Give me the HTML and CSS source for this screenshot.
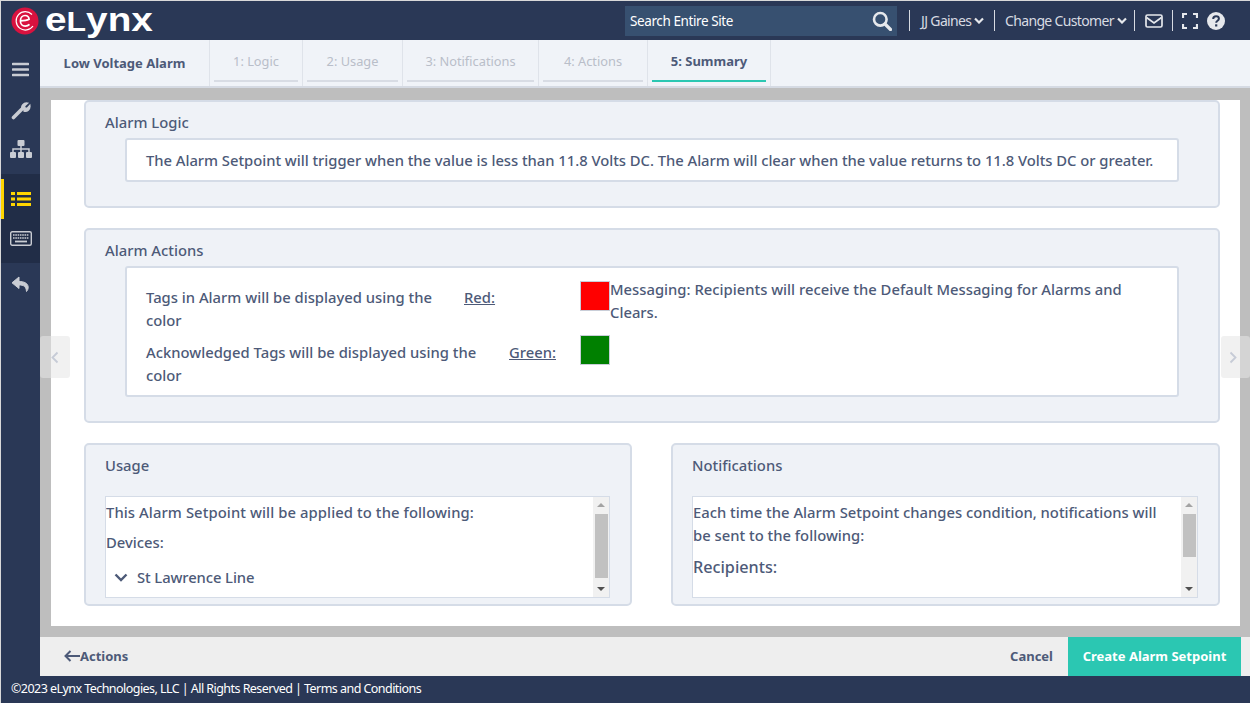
FILE: index.html
```html
<!DOCTYPE html>
<html lang="en">
<head>
<meta charset="utf-8">
<title>Low Voltage Alarm</title>
<link rel="stylesheet" href="styles.css">
</head>
<body>
<div class="app">
  <header class="topbar">
    <div class="brand">
      <svg class="logo-mark" width="28" height="28" viewBox="0 0 28 28"><circle cx="14" cy="14" r="13.500" fill="#d9123f"/><path d="M21 7.500A9.200 9.200 0 1 0 22 19" fill="none" stroke="#fff" stroke-width="1.200"/><path d="M9.500 13.800c3.500 0 7-.6 8.600-1.500-.2-2.200-1.800-3.800-4-3.800-2.800 0-4.700 2.400-4.700 5.400s2 5.200 4.800 5.200c1.800 0 3.200-.6 4.300-1.700" fill="none" stroke="#fff" stroke-width="1.700"/></svg>
      <span class="wordmark">e<span class="wordmark-l">L</span>ynx</span>
    </div>
    <div class="search"><span>Search Entire Site</span>
      <svg width="20" height="20" viewBox="0 0 20 20"><circle cx="8.300" cy="8.300" r="6.300" fill="none" stroke="#e6e8ec" stroke-width="2.600"/><path d="M13 13l5.500 5.500" stroke="#e6e8ec" stroke-width="3.200" stroke-linecap="round"/></svg>
    </div>
    <div class="topitem sep user">JJ Gaines <svg class="chev" width="10" height="7" viewBox="0 0 10 7"><path d="M1 1.500l4 4 4-4" fill="none" stroke="#e6e8ec" stroke-width="2.200"/></svg></div>
    <div class="topitem sep customer">Change Customer <svg class="chev" width="10" height="7" viewBox="0 0 10 7"><path d="M1 1.500l4 4 4-4" fill="none" stroke="#e6e8ec" stroke-width="2.200"/></svg></div>
    <div class="topicon sep mail"><svg width="18" height="14" viewBox="0 0 18 14"><rect x="1" y="1" width="16" height="12" rx="1.500" fill="none" stroke="#e6e8ec" stroke-width="1.700"/><path d="M1.500 3.500L9 9l7.500-5.500" fill="none" stroke="#e6e8ec" stroke-width="1.700"/></svg></div>
    <div class="topicon sep last">
      <svg width="16" height="16" viewBox="0 0 16 16"><path d="M1 5V1h4M11 1h4v4M15 11v4h-4M5 15H1v-4" fill="none" stroke="#e6e8ec" stroke-width="2.200"/></svg>
      <svg width="18" height="18" viewBox="0 0 18 18"><circle cx="9" cy="9" r="9" fill="#e6e8ec"/><path d="M6.200 7c0-1.700 1.300-2.700 2.900-2.700s2.800 1 2.800 2.400c0 2.100-2.700 2-2.700 4" fill="none" stroke="#2a3856" stroke-width="2"/><rect x="8.100" y="12.300" width="2.200" height="2.200" fill="#2a3856"/></svg>
    </div>
  </header>
  <div class="middle">
    <nav class="sidebar">
      <div class="navitem first"><svg width="17" height="15" viewBox="0 0 17 15"><path d="M1 2h15M1 7.500h15M1 13h15" stroke="#c9ccd3" stroke-width="2.600" stroke-linecap="round"/></svg></div>
      <div class="navitem tool"><svg width="20" height="20" viewBox="0 0 20 20"><path d="M11 9c-1-3 1.500-6.500 5.500-5.800L13.500 6l.5 2 2 .5 2.800-3c.6 4-2.800 6.500-5.800 5.500" fill="#c9ccd3" stroke="#c9ccd3" stroke-width="1.500" stroke-linecap="round"/><path d="M2.500 17.500l8-8" stroke="#c9ccd3" stroke-width="3.600" stroke-linecap="round"/></svg></div>
      <div class="navitem tree-nav"><svg width="24" height="20" viewBox="0 0 24 20"><g fill="#c9ccd3"><rect x="8.500" y="1" width="7" height="6" rx="1"/><rect x="1" y="13" width="6" height="6" rx="1"/><rect x="9" y="13" width="6" height="6" rx="1"/><rect x="17" y="13" width="6" height="6" rx="1"/></g><path d="M12 7v6M4 13v-3h16v3" fill="none" stroke="#c9ccd3" stroke-width="1.500"/></svg></div>
      <div class="navgroup">
        <div class="navitem active"><svg width="20" height="16" viewBox="0 0 20 16"><g fill="#ffd500"><rect x="0" y="1" width="4" height="3"/><rect x="0" y="6.500" width="4" height="3"/><rect x="0" y="12" width="4" height="3"/><rect x="6" y="1" width="14" height="3"/><rect x="6" y="6.500" width="14" height="3"/><rect x="6" y="12" width="14" height="3"/></g></svg></div>
        <div class="navitem keys"><svg width="22" height="15" viewBox="0 0 22 15"><rect x=".7" y=".7" width="20.600" height="13.600" rx="1.500" fill="none" stroke="#c9ccd3" stroke-width="1.400"/><path d="M3 4h16M3 7h16" stroke="#c9ccd3" stroke-width="1.600" stroke-dasharray="1.600 .7"/><path d="M5 10.500h12" stroke="#c9ccd3" stroke-width="1.800"/></svg></div>
      </div>
      <div class="navitem reply"><svg width="20" height="17" viewBox="0 0 20 17"><path d="M8 1L1 6.800l7 5.700V9c4.500 0 7 1 7.500 6.500 3-3 3-10-7.500-10z" fill="#c9ccd3" stroke="#c9ccd3" stroke-width="1" stroke-linejoin="round"/></svg></div>
    </nav>
    <div class="main">
      <div class="tabs">
        <div class="tab title"><span>Low Voltage Alarm</span></div>
        <div class="tab w1"><span>1: Logic</span></div>
        <div class="tab w2"><span>2: Usage</span></div>
        <div class="tab w3"><span>3: Notifications</span></div>
        <div class="tab w4"><span>4: Actions</span></div>
        <div class="tab w5 current"><span>5: Summary</span></div>
      </div>
      <div class="stage">
        <div class="sheet">
          <section class="card logic">
            <h2>Alarm Logic</h2>
            <div class="box sentence">The Alarm Setpoint will trigger when the value is less than 11.8 Volts DC. The Alarm will clear when the value returns to 11.8 Volts DC or greater.</div>
          </section>
          <section class="card actions">
            <h2>Alarm Actions</h2>
            <div class="box actions-box">
              <div class="colors">
                <div class="color-row">
                  <span class="color-label">Tags in Alarm will be displayed using the color</span>
                  <span class="color-name red">Red:</span>
                  <span class="swatch swatch-red"></span>
                </div>
                <div class="color-row">
                  <span class="color-label">Acknowledged Tags will be displayed using the color</span>
                  <span class="color-name green">Green:</span>
                  <span class="swatch swatch-green"></span>
                </div>
              </div>
              <div class="messaging">Messaging: Recipients will receive the Default Messaging for Alarms and Clears.</div>
            </div>
          </section>
          <div class="pair">
            <section class="card half">
              <h2>Usage</h2>
              <div class="scrollbox">
                <div class="scrolltext">
                  <p class="applied">This Alarm Setpoint will be applied to the following:</p>
                  <p class="devices">Devices:</p>
                  <p class="tree"><svg width="14" height="9" viewBox="0 0 14 9"><path d="M1.500 1.500L7 7l5.500-5.500" fill="none" stroke="#4d5a78" stroke-width="2.400"/></svg>St Lawrence Line</p>
                </div>
                <div class="scrollbar"><i class="up"></i><b class="thumb thumb-a"></b><i class="down"></i></div>
              </div>
            </section>
            <section class="card half">
              <h2>Notifications</h2>
              <div class="scrollbox">
                <div class="scrolltext">
                  <p class="wrap">Each time the Alarm Setpoint changes condition, notifications will be sent to the following:</p>
                  <p class="recipients">Recipients:</p>
                </div>
                <div class="scrollbar"><i class="up"></i><b class="thumb thumb-b"></b><i class="down"></i></div>
              </div>
            </section>
          </div>
        </div>
        <div class="pager left"><svg width="8" height="13" viewBox="0 0 8 13"><path d="M6.500 1.500l-5 5 5 5" fill="none" stroke="#c6cbd6" stroke-width="1.800"/></svg></div>
        <div class="pager right"><svg width="8" height="13" viewBox="0 0 8 13"><path d="M1.500 1.500l5 5-5 5" fill="none" stroke="#c6cbd6" stroke-width="1.800"/></svg></div>
      </div>
      <div class="actionbar">
        <div class="back"><svg width="16" height="12" viewBox="0 0 16 12"><path d="M6.500 1L1.500 6l5 5M2 6h14" fill="none" stroke="#4d5a78" stroke-width="2"/></svg>Actions</div>
        <div class="cancel">Cancel</div>
        <div class="create">Create Alarm Setpoint</div>
      </div>
    </div>
  </div>
  <footer class="footer">©2023 eLynx Technologies, LLC | All Rights Reserved | Terms and Conditions</footer>
</div>
</body>
</html>
```

FILE: styles.css
```css
* { box-sizing: border-box; }
html, body { margin: 0; height: 100%; overflow: hidden; background: #2a3856; }
body { font-family: "Noto Sans", "Open Sans", sans-serif; font-size: 14.800px; color: #4d5a78; }
.app { width: 1250px; height: 703px; display: flex; flex-direction: column; border-top: 1px solid #d9d9d9; border-left: 1px solid #d9d9d9; }

.topbar { height: 39px; flex: none; background: #2a3856; display: flex; align-items: center; color: #d8dbe2; font-size: 14px; letter-spacing: -.65px; }
.brand { width: 624px; height: 39px; display: flex; align-items: center; padding-left: 10px; gap: 6px; }
.logo-mark { flex: none; }
.wordmark { font-family: "Liberation Sans", sans-serif; font-weight: 700; font-size: 34px; line-height: 38px; letter-spacing: 0; color: #fff; transform: scaleX(1.140); transform-origin: left; }
.wordmark-l { font-size: 28px; }
.search { width: 272px; height: 30px; background: #375070; display: flex; align-items: center; justify-content: space-between; padding: 0 5px 0 5px; color: #fff; font-size: 13.500px; letter-spacing: -.4px; margin-top: 1px; }
.topitem, .topicon { height: 21px; display: flex; align-items: center; gap: 3px; white-space: nowrap; }
.sep { border-left: 1px solid #d8dbe2; }
.user { width: 85px; margin-left: 12px; padding-left: 11px; }
.customer { width: 140px; padding-left: 10px; }
.topicon.mail { width: 38px; padding-left: 10px; }
.topicon.last { gap: 9px; padding-left: 9px; }

.middle { flex: 1; display: flex; min-height: 0; }
.sidebar { width: 39px; flex: none; background: #2a3856; }
.navitem { display: flex; align-items: center; justify-content: center; }
.navitem.first { height: 52px; padding-top: 6px; }
.navitem.tool { height: 35px; }
.navitem.tree-nav { height: 47px; padding-bottom: 3px; }
.navgroup { background: #212d47; height: 89px; padding-top: 5px; }
.navitem.active { height: 40px; border-left: 3px solid #ffd500; padding-right: 3px; }
.navitem.keys { height: 38px; }
.navitem.reply { height: 42px; }

.main { flex: 1; min-width: 0; display: flex; flex-direction: column; }
.tabs { height: 48px; flex: none; background: #f0f3f8; display: flex; border-bottom: 2px solid #d5dae3; font-size: 12.800px; color: #b9bec9; }
.tab { border-right: 1px solid #dfe3ea; padding: 0 4px 4px; display: flex; align-items: stretch; }
.tab span { width: 100%; display: flex; align-items: center; justify-content: center; border-bottom: 2px solid #d8dce4; padding-top: 1px; }
.tab.title { width: 170px; font-weight: 700; color: #4d5a78; padding: 0; font-size: 13px; }
.tab.title span { border: 0; padding: 0 0 1px; }
.tab.w1 { width: 93px; }
.tab.w2 { width: 100px; }
.tab.w3 { width: 136px; }
.tab.w4 { width: 109px; }
.tab.w5 { width: 123px; font-weight: 700; color: #4d5a78; font-size: 13px; }
.tab.current span { border-bottom-color: #2bc7b2; }

.stage { flex: 1; min-height: 0; background: #bebebe; padding: 12px 10px 11px 11px; position: relative; }
.sheet { height: 100%; background: #fff; padding: 0 20px 0 33px; overflow: hidden; display: flex; flex-direction: column; gap: 20px; }
.card { background: #eff2f7; border: 2px solid #d5dce7; border-radius: 5px; flex: none; }
.card h2 { font-size: 14.800px; font-weight: 500; margin: 0; line-height: 20px; padding: 10px 0 0 19px; }
.box { background: #fff; border: 2px solid #d5dce7; border-radius: 3px; margin: 6px 39px 0 39px; }
.logic { height: 108px; }
.sentence { height: 44px; line-height: 40px; padding-left: 19px; white-space: nowrap; font-weight: 500; letter-spacing: -.035px; }
.actions { height: 195px; }
.actions-box { height: 131px; display: flex; padding: 8px 20px 0 19px; line-height: 23px; font-weight: 500; }
.colors { width: 434px; flex: none; }
.color-row { display: flex; height: 54px; }
.color-label { padding: 10px 15px 0 0; flex: none; }
.color-row:first-child .color-label { width: 318px; }
.color-row:last-child .color-label { width: 363px; padding-top: 11px; }
.color-name { text-decoration: underline; padding-top: 10px; flex: none; }
.color-row:last-child .color-name { padding-top: 11px; }
.color-name.red { width: 116px; }
.color-name.green { width: 71px; }
.swatch { width: 30px; height: 30px; flex: none; border: 1px solid #c9ced8; margin-top: 5px; }
.swatch-red { background: #f00; }
.swatch-green { background: #008000; }
.messaging { margin-left: 30px; padding-top: 2px; flex: 1; }

.pair { display: grid; grid-template-columns: 548px 549px; gap: 39px; flex: none; }
.half { height: 163px; }
.scrollbox { height: 102px; margin: 21px 20px 0 19px; background: #fff; border: 1px solid #d5dce7; display: flex; overflow: hidden; }
.scrolltext { flex: 1; min-width: 0; font-weight: 500; line-height: 23px; }
.scrolltext p { margin: 0; padding-top: 4px; height: 27px; white-space: nowrap; }
.scrolltext .applied { letter-spacing: .09px; }
.scrolltext .devices { height: 23px; padding-top: 0; margin-top: 7px; }
.scrolltext .tree { display: flex; align-items: center; gap: 9px; height: 23px; padding: 0 0 0 8px; margin-top: 12px; letter-spacing: -.1px; }
.scrolltext .wrap { white-space: normal; height: auto; padding-right: 16px; }
.scrolltext .recipients { font-size: 16.200px; height: 23px; padding-top: 0; margin-top: 9px; }
.scrollbar { width: 16px; flex: none; background: #f1f1f1; position: relative; display: flex; flex-direction: column; align-items: center; }
.scrollbar .thumb { width: 13px; position: absolute; left: 2px; top: 17px; background: #c1c1c1; }
.thumb-a { height: 64px; }
.thumb-b { height: 43px; }
.up, .down { position: absolute; width: 0; height: 0; border-left: 4px solid transparent; border-right: 4px solid transparent; }
.up { top: 6px; border-bottom: 4px solid #a3a3a3; }
.down { bottom: 6px; border-top: 4px solid #505050; }

.pager { position: absolute; top: 248px; width: 29px; height: 42px; background: rgba(230,230,230,.55); border-radius: 3px; display: flex; align-items: center; justify-content: center; }
.pager.left { left: 0; width: 30px; }
.pager.right { right: 0; padding-right: 5px; }

.actionbar { height: 39px; flex: none; background: #eee; display: flex; align-items: center; font-size: 13px; font-weight: 700; padding: 0 9px 0 24px; }
.back { display: flex; align-items: center; margin-right: auto; padding-bottom: 2px; }
.cancel { margin-right: 15px; padding-bottom: 2px; }
.create { width: 173px; height: 39px; background: #2bc7b2; color: #fff; display: flex; align-items: center; justify-content: center; padding-bottom: 2px; }

.footer { height: 27px; flex: none; background: #2a3856; color: #fff; font-size: 12.500px; letter-spacing: -.55px; line-height: 26px; padding-left: 10px; }
```
